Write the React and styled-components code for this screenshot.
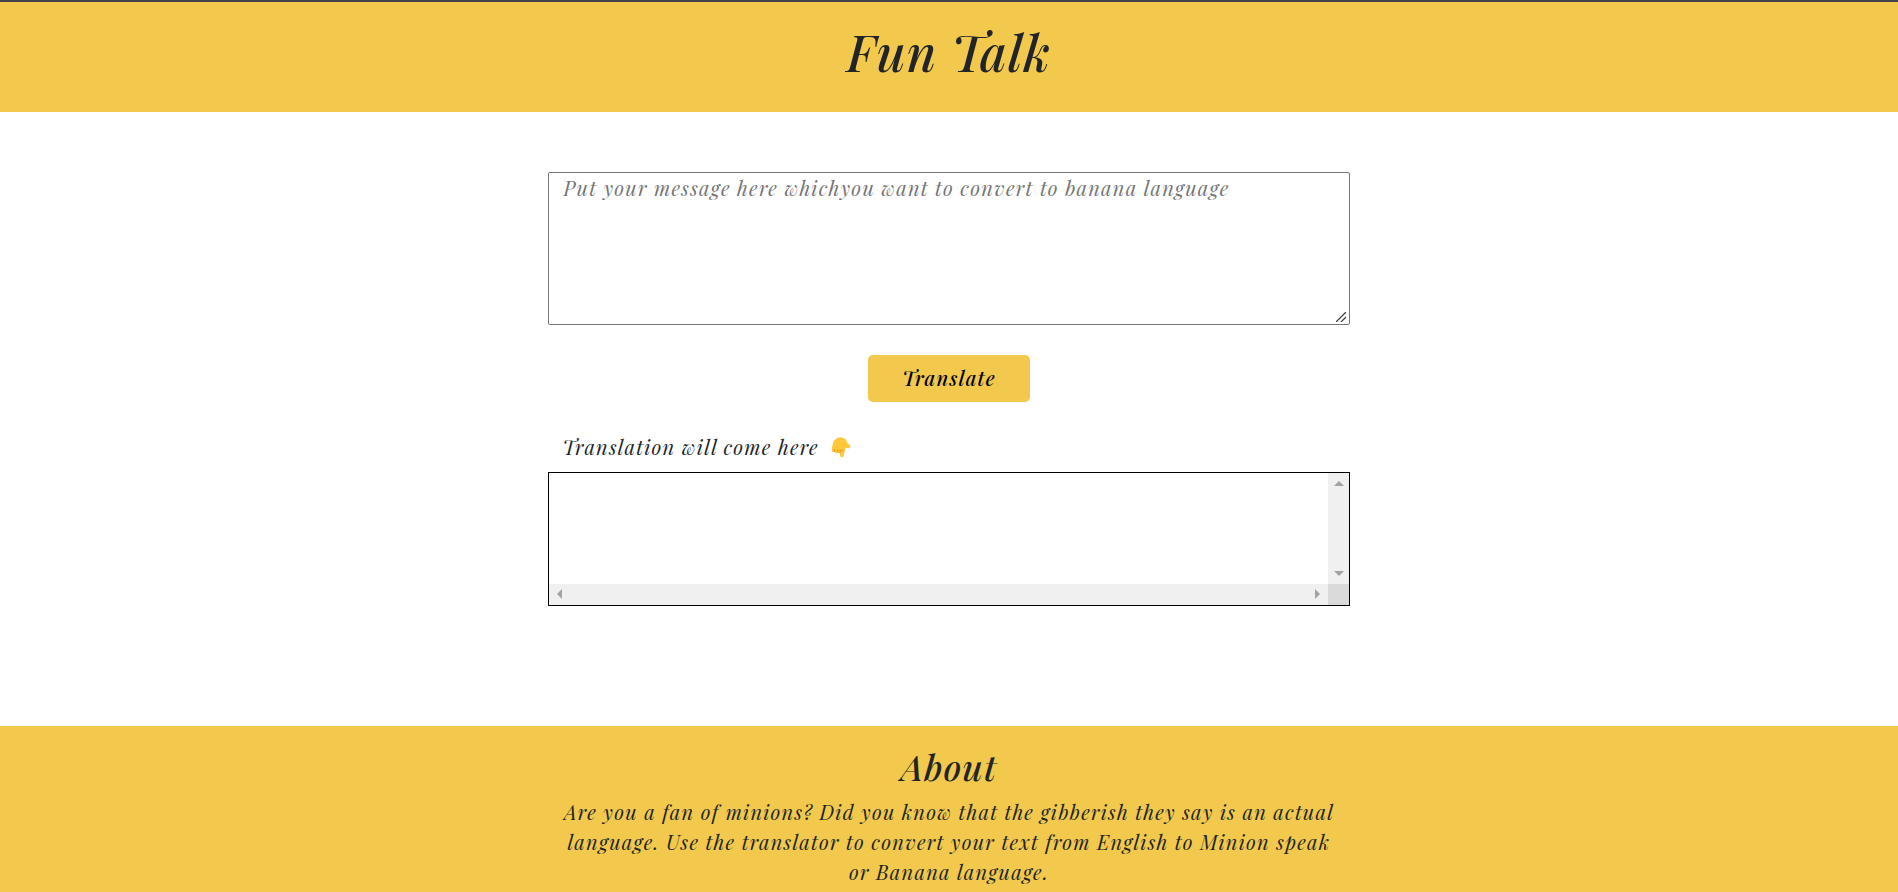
import React, { useState } from "react";
import styled, { createGlobalStyle } from "styled-components";

const yellow = "#f2c94c";
const serif = `"Playfair Display", "Liberation Serif", serif`;

const GlobalStyle = createGlobalStyle`
  *, *::before, *::after { box-sizing: border-box; }
  body {
    margin: 0;
    background: #fff;
    color: #212529;
    font: italic 400 20px/30px ${serif};
    letter-spacing: 0.0625em;
  }
`;

const Header = styled.header`
  border-top: 2px solid #45434a;
  background: ${yellow};
  padding: 20px 16px 30px;
  text-align: center;
`;

const Title = styled.h1`
  margin: 0;
  font-size: 50px;
  line-height: 60px;
  font-weight: 500;
`;

const Column = styled.div`
  width: 90vh;
  max-width: 100%;
  margin: 0 auto;
`;

const Translator = styled.form`
  display: flex;
  flex-direction: column;
  gap: 30px;
  padding: 60px 0 120px;
`;

const MessageField = styled.div`
  position: relative;
`;

const Message = styled.textarea`
  display: block;
  width: 100%;
  margin: 0;
  padding: 0 15px 1px;
  border: 1px solid #767676;
  border-radius: 2px;
  background: #fff;
  color: inherit;
  font: inherit;
  letter-spacing: inherit;
  resize: vertical;
  outline: 0;

  &::placeholder { color: #757575; opacity: 1; }
  &::-webkit-resizer { background: transparent; }
`;

const Grip = styled.svg`
  position: absolute;
  right: 4px;
  bottom: 3px;
  pointer-events: none;
`;

const TranslateButton = styled.button`
  align-self: center;
  padding: 8px 34px 9px;
  border: 0;
  border-radius: 5px;
  background: ${yellow};
  color: #000;
  font: inherit;
  font-weight: 500;
  letter-spacing: inherit;
  cursor: pointer;
`;

const Result = styled.section`
  display: flex;
  flex-direction: column;
  gap: 10px;
`;

const ResultLabel = styled.label`
  display: flex;
  align-items: center;
  gap: 12px;
  padding: 0 15px;
`;

const ResultBox = styled.div`
  display: grid;
  grid-template: minmax(0, 1fr) 21px / minmax(0, 1fr) 21px;
  height: 15vh;
  min-height: 90px;
  border: 1px solid #000;
`;

const ResultText = styled.output`
  overflow: hidden;
  padding: 0 15px;
`;

const Track = styled.div`
  display: flex;
  flex-direction: ${(p) => (p.$vertical ? "column" : "row")};
  align-items: center;
  justify-content: space-between;
  padding: ${(p) => (p.$vertical ? "8px 0" : "0 8px")};
  background: #f0f0f0;
`;

const Corner = styled.div`
  background: #dadada;
`;

const About = styled.section`
  padding: 20px 0 30px;
  background: ${yellow};
  text-align: center;
`;

const AboutTitle = styled.h2`
  margin: 0 0 9px;
  font-size: 35px;
  line-height: 42px;
  font-weight: 500;
`;

const AboutText = styled.p`
  margin: 0;
  padding: 0 15px;
`;

const arrows = {
  up: "M5 0 10 5H0z",
  down: "M0 0H10L5 5z",
  left: "M5 0V10L0 5z",
  right: "M0 0 5 5 0 10z",
};

function Arrow({ to }) {
  const vertical = to === "up" || to === "down";
  return (
    <svg width={vertical ? 10 : 5} height={vertical ? 5 : 10} fill="#a3a3a3" aria-hidden="true">
      <path d={arrows[to]} />
    </svg>
  );
}

function PointingDown() {
  return (
    <svg width="20" height="21" viewBox="0 0 20 21" role="img" aria-label="pointing down">
      <path
        d="M2 6C3 2.500 6 .5 9.500 .5C13 .5 15 2 15.800 4.500C16.300 6.300 17.500 7.200 18.600 8C20 9 19.300 11.200 17.600 11.300C16.200 11.400 15.200 11 14.500 10.500L13.800 14L12.600 19C12.200 21 9 20.600 9.100 18.600L9.200 15.500C8.500 16.700 6.800 16.500 6.300 15.400C5.400 16.300 3.900 16 3.600 14.800C2.300 15.500 .8 14.800 .8 13.200C.8 11 1.200 8.500 2 6Z"
        fill="#ffc83b"
      />
      <path
        d="M3.600 14.600 3.800 12.500M6.300 15.200 6.300 12.800M9.200 16 9.100 13M9.300 13C10.500 14.200 12 14 12.800 13"
        fill="none"
        stroke="#eb9a25"
        strokeLinecap="round"
      />
    </svg>
  );
}

export default function App() {
  const [message, setMessage] = useState("");
  const [result, setResult] = useState("");

  const translate = (event) => {
    event.preventDefault();
    setResult(message);
  };

  return (
    <>
      <GlobalStyle />
      <Header>
        <Title>Fun Talk</Title>
      </Header>
      <main>
        <Column>
          <Translator onSubmit={translate}>
            <MessageField>
              <Message
                rows={5}
                aria-label="Message"
                placeholder="Put your message here whichyou want to convert to banana language"
                value={message}
                onChange={(event) => setMessage(event.target.value)}
              />
              <Grip width="10" height="10" stroke="#444" strokeWidth="1.3" aria-hidden="true">
                <path d="M0 10 10 0M5 10 10 5" />
              </Grip>
            </MessageField>
            <TranslateButton type="submit">Translate</TranslateButton>
            <Result>
              <ResultLabel htmlFor="result">
                Translation will come here
                <PointingDown />
              </ResultLabel>
              <ResultBox>
                <ResultText id="result">{result}</ResultText>
                <Track $vertical>
                  <Arrow to="up" />
                  <Arrow to="down" />
                </Track>
                <Track>
                  <Arrow to="left" />
                  <Arrow to="right" />
                </Track>
                <Corner />
              </ResultBox>
            </Result>
          </Translator>
        </Column>
        <About>
          <Column>
            <AboutTitle>About</AboutTitle>
            <AboutText>
              Are you a fan of minions? Did you know that the gibberish they say is an actual
              language. Use the translator to convert your text from English to Minion speak or
              Banana language.
            </AboutText>
          </Column>
        </About>
      </main>
    </>
  );
}
